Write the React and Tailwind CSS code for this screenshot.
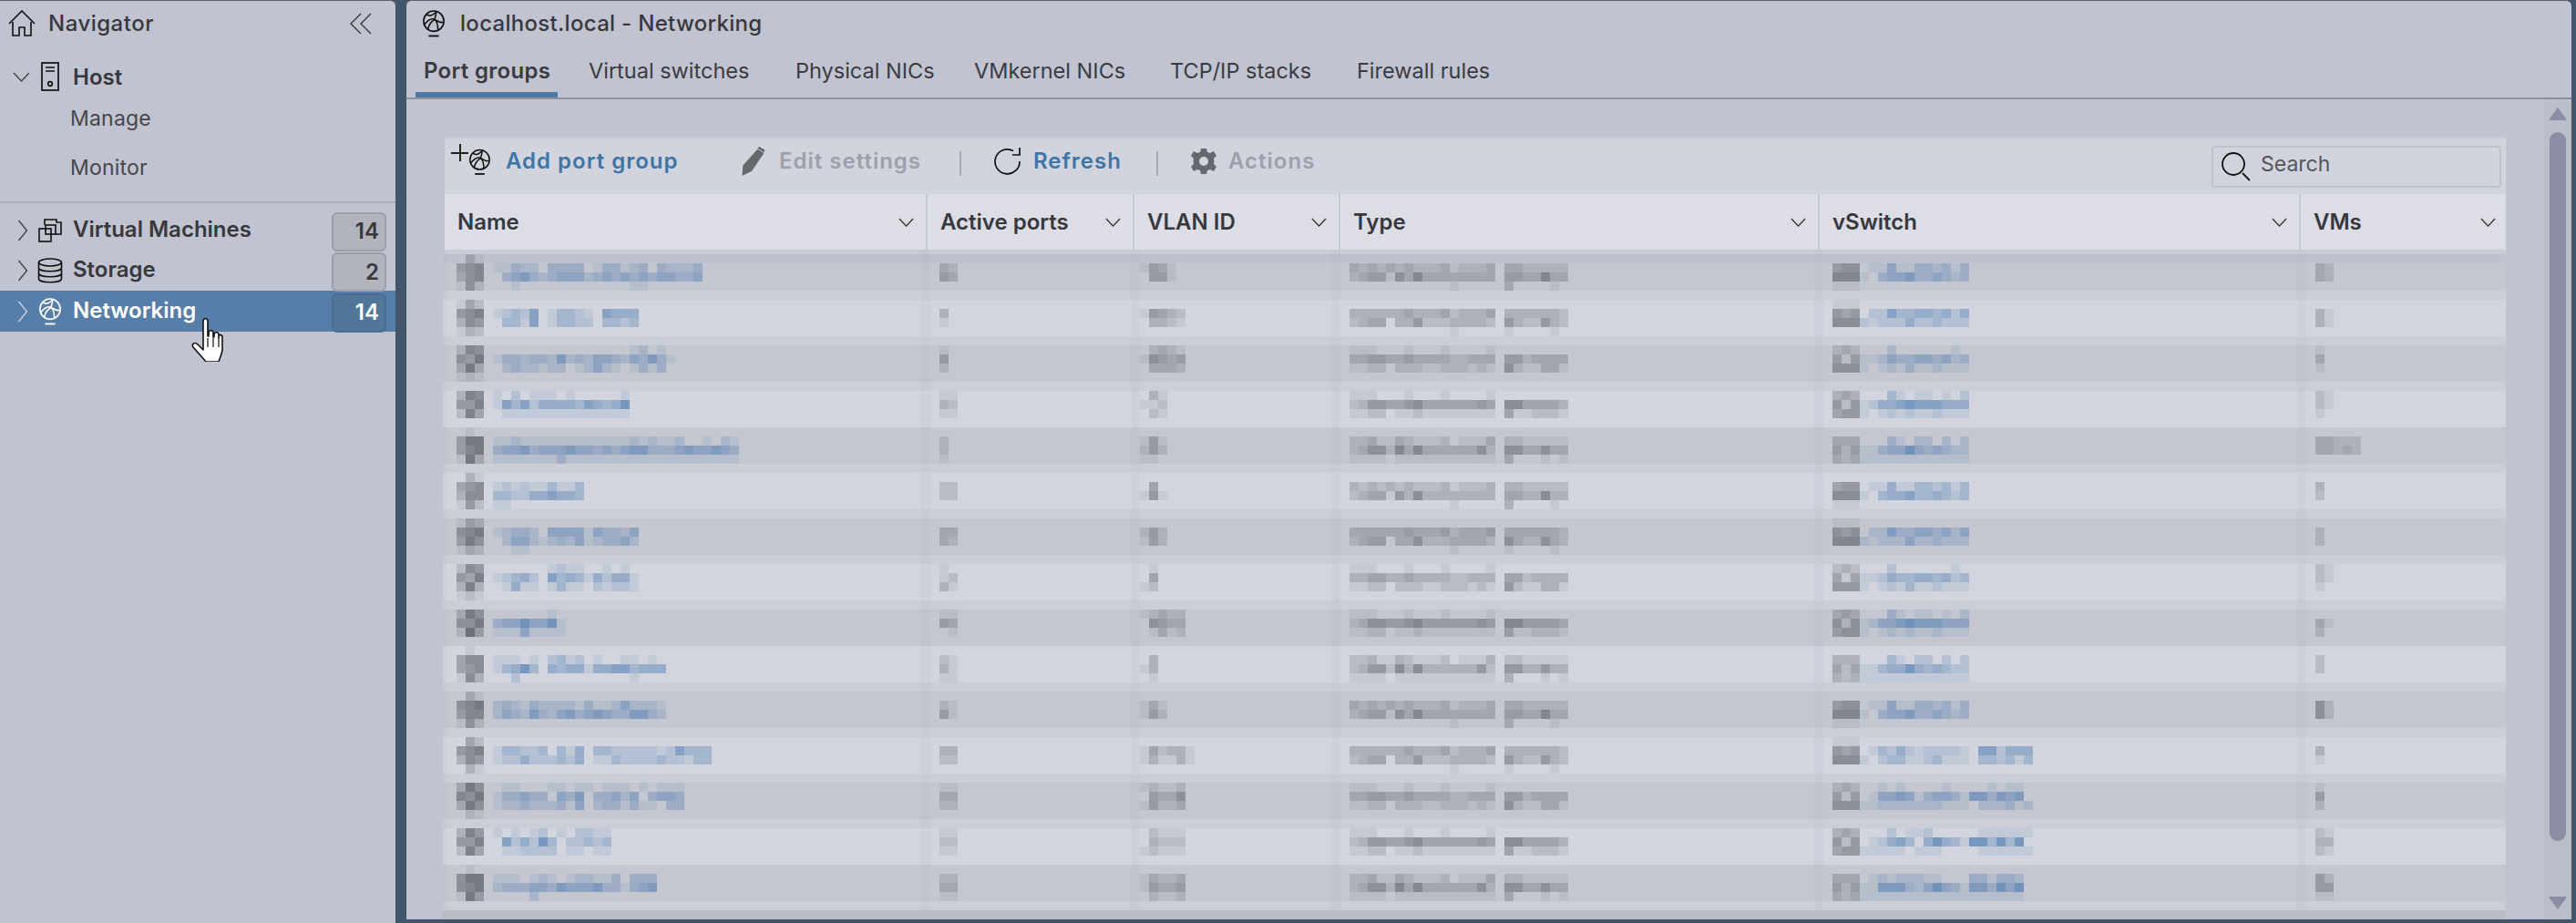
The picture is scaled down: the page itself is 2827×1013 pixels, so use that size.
import React from "react";

const GRAY = "rgb(60,62,70)";
const BLUE = "rgb(60,110,170)";

function Blocks({ rows, ink, step }) {
  const w = Math.max(1, ...rows.map((r) => r.length)) * 10;
  return (
    <svg width={w} height={40} className="block shrink-0" shapeRendering="crispEdges">
      {rows.map((r, y) =>
        r.split("").map((c, x) =>
          c === "." ? null : (
            <rect key={y + "-" + x} x={x * 10} y={y * 10} width={10} height={10} fill={ink} opacity={Number(c) * step} />
          )
        )
      )}
    </svg>
  );
}

const icons = [
  [".31", "456", "356", "152"], ["142", "567", "365", "132"], ["265", "547", "373", "121"], ["376", "557", "274", ""], [".1.", "477", "467", "173"],
  [".31", "456", "366", "152"], ["143", "567", "475", "132"], ["265", "547", "373", "121"], ["375", "557", "284", ""], [".1.", "466", "456", "163"],
  [".31", "567", "466", "152"], [".42", "567", "365", ".31"], ["375", "657", "375", ".21"], ["375", "557", "274", ""], [".1.", "577", "567", "174"],
];

const names = [
  ["", "11322.3333.133123.32223", ".3453234442343434344334", "..1............11"],
  ["", "12325.13321.5444", ".3315.13322.3323", ""],
  ["...............12.1", "13323325232443243531", ".2322122.12421.1313.", ""],
  ["1.2.111.1.....1", "153524444354346", ".11111111111111", ""],
  ["", "112111111111111212112..1.21", "344534445443434553334544543", "111111131111111111111111111"],
  ["", "1212113113", "3322445443", "11"],
  ["", "12332.4444143324", ".244212324123342", "..11"],
  ["......1211..1.1", "12342.5343142441", ".1411.1311.21221", ""],
  ["......1", "34464461", "11141111", ""],
  ["", "111.1.2312.1..11.1", "13463.4344144553444", "..2............1..."],
  ["", "2321322221311242221", "2432532453454335532", ""],
  ["", "133223.314.3322222125333", "1224222324.1132222322133", ""],
  [".11...11.11.111.1.111", "133433.435.33424.3443", "1223222314.2331311.33", ""],
  ["1.1.12.1.2211", ".524263.22323", ".112222.11.11", ""],
  ["", "111.121.122113.333", "233344354445331345", "....2............."],
];

const active = [
  ["", "32", "43", ""], ["", "3.", "1.", ""], ["1.", "4.", "2.", ""], ["11", "32", "11", ""], ["", "2.", "2.", "1."],
  ["", "22", "22", ""], ["", "33", "32", ""], ["1.", "12", "31", ""], ["11", "43", ".1", ""], ["", "21", "31", "11"],
  ["", "21", "41", ""], ["", "33", "22", ""], ["11", "33", "22", ""], ["11", "22", "11", ""], ["", "22", "33", "11"],
];

const vlan = [
  ["", "1431", ".441", ""], ["", "15432", ".3321", ""], [".2321", "15434", ".3332", ""], [".31", "112", ".21", ""], ["", "141", "242", "11."],
  ["", ".4", "151", ""], ["", "242", "142", ""], [".1", ".4", "12", ""], ["12322", ".5433", ".1312", ""], ["", ".3", "13", ".1"],
  ["", "131", "142", ""], ["", "142331", "131131", ""], ["12112", ".4335", "14223", ""], [".2111", ".3222", "12111", ""], ["", "13223", "14334", ".2112"],
];

const typePhases = [
  ["", "3232323222312223.3322222", "2344153633333333.4433633", "...........1.....3....1."],
  ["", "3333334333423334.3333332", "2344.33522233332.5322532", "...........1.....1....1."],
  ["111...1...1....1", "3344334333322333.4423333", "1122.22211222121.5211331", ""],
  ["111...1...1....1", "2355445644444454.6644443", "1122.11211111111.4112221", ""],
  ["", "22311321112.1113.2211111", "2355263633333352.5533533", "1111.11111111111.3...1.1"],
];

const swIcon = [
  ["", "455", "666", "111"],
  ["111", "545", "666", ""],
  ["232", "414", "555", ""],
  ["343", "525", "455", ""],
  ["", "333", "424", "323"],
];

const swText = [
  ["", ".11411332313", "1.3445334323", ""],
  ["", ".22533443424", "212224223222", ""],
  ["...2......1.", "112433443423", "1.1213112111", ""],
  ["...31.11.1.2", "124456555444", "1.1212112111", ""],
  ["", "...31.22.2.2", "113446434322", "111111111111"],
];

const swTail = {
  11: ["", ".13242122221.552444", "1.2331123111.332313", ""],
  12: ["..1.1....1....1.11", ".14454134431553545", "112222222111.222312", ""],
  13: ["...2.112.....111111", ".12453.46431663636", "11111.111....111111", ""],
  14: ["", ".12122211...331332", "115553246431553646", "111111111111111111"],
};

const vms = [
  ["", "32", "32", ""], ["", "31", "31", ""], ["1", "3", "1", ""], ["21", "21", "1", ""], ["", "33222", "33232", ""],
  ["", "3", "2", ""], ["", "2", "2", ""], ["21", "21", "1", ""], ["", "31", "2", ""], ["", "2.", "2.", ""],
  ["", "52", "52", ""], ["", "3", "1", ""], ["1", "4", "2", ""], ["21", "33", "21", ""], ["", "42", "44", "11"],
];

const spacer = [1, 1, 1, 0, 1, 1, 1, 1, 0, 1, 1, 1, 1, 0, 1];

function Globe({ className, color = "#111" }) {
  return (
    <svg viewBox="0 0 28 32" className={className} fill="none" stroke={color} strokeWidth="1.7">
      <circle cx="14" cy="13" r="12" />
      <path d="M5 5c5 3 8 1 12-3M3 17c4-5 8-8 12-6s7 5 10 3M7 23c1-5 3-9 8-12 3 2 4 7 4 13M15 11c1-3 2-6 2-9" />
      <path d="M8 30.500h12" strokeWidth="2" />
    </svg>
  );
}

function Chevron({ dir, className, color = "#333" }) {
  const d = dir === "down" ? "M1 1l8.500 9L18 1" : "M1 1l9 11L1 23";
  const vb = dir === "down" ? "0 0 19 11" : "0 0 11 24";
  return (
    <svg viewBox={vb} className={className} fill="none" stroke={color} strokeWidth="1.4">
      <path d={d} />
    </svg>
  );
}

function NavRow({ icon, label, badge, selected, h }) {
  return (
    <div className={"flex items-center " + h + " " + (selected ? "bg-[#567ea8]" : "")}>
      <div className="flex w-[38px] justify-end pr-[7px]">
        <Chevron dir="right" className="h-[24px] w-[12px]" color={selected ? "#c5d2e2" : "#444"} />
      </div>
      <div className="flex w-[42px] justify-center pr-[8px]">{icon}</div>
      <span className={"flex-1 pb-[2px] text-[24px] font-semibold " + (selected ? "text-white" : "text-[#37383d]")}>{label}</span>
      <div
        className={
          "mr-[10px] mt-[3px] flex h-[43px] w-[60px] items-center justify-end rounded-md border-2 pr-[6px] text-[24px] font-semibold " +
          (selected ? "border-[#4a6d94] bg-[#507699] text-white" : "border-[#9c9eaa] bg-[#b1b3bd] text-[#37383d]")
        }
      >
        {badge}
      </div>
    </div>
  );
}

function Tab({ w, label, active }) {
  return (
    <div className={"flex h-full " + w}>
      <div
        className={
          "flex h-full items-center px-[9px] text-[#3a3b40] " +
          (active ? "w-[156px] border-b-[6px] border-[#4f7aa6] pt-[4px] text-[24px] font-semibold tracking-[0.3px]" : "pb-[3px] text-[23.500px]")
        }
      >
        <span className="whitespace-nowrap">{label}</span>
      </div>
    </div>
  );
}

function Head({ w, label, last }) {
  return (
    <div
      className={
        "flex h-full items-center justify-between pl-[14px] text-[24px] font-semibold text-[#37383d] " +
        w +
        " " +
        (last ? "pr-[11px]" : "border-r-2 border-[#c7c9d2] pr-[13px]")
      }
    >
      <span className="whitespace-nowrap">{label}</span>
      <Chevron dir="down" className="h-[10px] w-[17px]" />
    </div>
  );
}

function Sep() {
  return <div className="mt-[4px] h-[27px] w-[2px] bg-[#a7a9b4]" />;
}

function Hand() {
  return (
    <svg viewBox="0 0 36 48" className="absolute left-[209px] top-[349px] h-[48px] w-[36px]" stroke="#111" strokeWidth="1.6" fill="#fff" strokeLinejoin="round">
      <path d="M14 3c0-3 5-3 5 0v17l1 0v-4c0-3 5-3 5 0v5h1v-3c0-3 5-3 5 0v4h0v-2c0-2 4-2 4 1v13c0 5-3 10-4 14H17c-3-4-8-9-14-16-2-4 2-6 5-3l6 6z" />
      <path d="M19 22v10M25 22v10M31 22v10" fill="none" strokeWidth="1.2" />
    </svg>
  );
}

const strip = "absolute bottom-[10px] top-0 w-[10px] bg-[#6a6e80]/[0.04]";
const btn = "text-[24px] font-semibold tracking-[1px] whitespace-nowrap";

export default function App() {
  return (
    <div className="relative flex h-[1013px] w-[2827px] overflow-hidden bg-[#42556a] text-[#37383d] [font-family:Inter,'Liberation_Sans',sans-serif]">
      <aside className="h-full w-[434px] shrink-0 rounded-tr-md border-t border-[#5b6470] bg-[#c1c3d0]">
        <div className="flex h-[49px] items-center">
          <svg viewBox="0 0 30 30" className="ml-[9px] h-[30px] w-[30px]" fill="none" stroke="#111" strokeWidth="1.6">
            <path d="M1 15L15 1l14 14" />
            <path d="M5 13v15h7v-9h6v9h7V13" />
          </svg>
          <span className="ml-[14px] flex-1 text-[24px] font-medium tracking-[0.5px] text-[#37383d]">Navigator</span>
          <svg viewBox="0 0 24 24" className="mr-[26px] h-[24px] w-[24px]" fill="none" stroke="#333" strokeWidth="1.3">
            <path d="M12 1L1 12l11 11M23 1L12 12l11 11" />
          </svg>
        </div>
        <div className="mt-[12px] flex h-[44px] items-center">
          <Chevron dir="down" className="ml-[13px] h-[11px] w-[21px]" color="#444" />
          <svg viewBox="0 0 20 32" className="ml-[11px] h-[32px] w-[20px]" fill="none" stroke="#111" strokeWidth="1.7">
            <rect x="1" y="1" width="18" height="30" />
            <path d="M5 6h10M5 10h10" />
            <circle cx="10" cy="24" r="2.300" />
          </svg>
          <span className="ml-[15px] pt-[2px] text-[24px] font-semibold text-[#37383d]">Host</span>
        </div>
        <div className="flex h-[48px] items-center pl-[77px] text-[23px] tracking-[0.2px] text-[#46474c]">Manage</div>
        <div className="mt-[3px] flex h-[54px] items-center pl-[77px] text-[23px] tracking-[0.2px] text-[#46474c]">Monitor</div>
        <div className="mt-[10px] h-[2px] bg-[#a9abb6]" />
        <div className="pt-[7px]">
          <NavRow
            h="h-[45px]"
            label="Virtual Machines"
            badge="14"
            icon={
              <svg viewBox="0 0 26 26" className="h-[26px] w-[26px]" fill="none" stroke="#111" strokeWidth="1.6">
                <path d="M7 7V1h13v3h5v13h-6" />
                <rect x="1" y="11" width="13" height="14" />
                <rect x="8" y="7" width="11" height="10" />
              </svg>
            }
          />
          <NavRow
            h="h-[44px]"
            label="Storage"
            badge="2"
            icon={
              <svg viewBox="0 0 28 28" className="h-[28px] w-[28px]" fill="none" stroke="#111" strokeWidth="1.6">
                <ellipse cx="14" cy="5" rx="12.500" ry="4" />
                <path d="M1.500 5v18c0 5 25 5 25 0V5M1.500 11c0 5 25 5 25 0M1.500 17c0 5 25 5 25 0" />
              </svg>
            }
          />
          <NavRow h="h-[45px]" label="Networking" badge="14" selected icon={<Globe className="h-[30px] w-[26px]" color="#fff" />} />
        </div>
      </aside>
      <Hand />
      <main className="ml-[12px] flex h-[1009px] w-[2376px] shrink-0 flex-col rounded-t-md border-t border-[#5b6470] bg-[#c1c3d0]">
        <div className="flex h-[50px] shrink-0 items-center pl-[17px]">
          <Globe className="h-[30px] w-[26px]" />
          <span className="ml-[16px] text-[24px] font-medium tracking-[0.3px] text-[#37383d]">localhost.local - Networking</span>
        </div>
        <div className="flex h-[58px] shrink-0 border-b-2 border-[#8f919e] pl-[10px]">
          <Tab w="w-[181px]" label="Port groups" active />
          <Tab w="w-[227px]" label="Virtual switches" />
          <Tab w="w-[196px]" label="Physical NICs" />
          <Tab w="w-[215px]" label="VMkernel NICs" />
          <Tab w="w-[205px]" label="TCP/IP stacks" />
          <Tab w="w-[180px]" label="Firewall rules" />
        </div>
        <div className="flex min-h-0 flex-1">
          <div className="w-[2346px] shrink-0 pl-[40px] pt-[41px]">
            <div className="w-[2264px] rounded-t-sm border-t-2 border-[#c8cad4]">
              <div className="ml-[2px] flex h-[61px] items-center justify-between bg-[#d1d4dd] pr-[5px]">
                <div className="flex items-center pb-[11px]">
                  <div className="relative ml-[7px] mt-[10px] h-[44px] w-[45px]">
                    <span className="absolute left-0 top-[7px] h-[2px] w-[19px] bg-[#222]" />
                    <span className="absolute left-[9px] top-[-2px] h-[19px] w-[2px] bg-[#222]" />
                    <Globe className="absolute left-[19px] top-[3px] h-[30px] w-[25px]" />
                  </div>
                  <div className="ml-[15px] w-[257px] text-[#3f74a6]">
                    <span className={btn}>Add port group</span>
                  </div>
                  <svg viewBox="0 0 30 36" className="h-[32px] w-[28px]" fill="#66686e">
                    <path d="M21 3l8 5-15 22-12 6 1-13zM23 0l7 4-1 3-8-5z" />
                  </svg>
                  <div className="ml-[15px] w-[198px] text-[#9da0ab]">
                    <span className={btn}>Edit settings</span>
                  </div>
                  <Sep />
                  <svg viewBox="0 0 30 30" className="ml-[36px] h-[30px] w-[30px]" fill="none" stroke="#111" strokeWidth="1.7">
                    <path d="M21 3.500A13.500 13.500 0 1 0 28 15" />
                    <path d="M28 0v8h-8" />
                  </svg>
                  <div className="ml-[13px] w-[135px] text-[#3f74a6]">
                    <span className={btn}>Refresh</span>
                  </div>
                  <Sep />
                  <svg viewBox="0 0 28 28" className="ml-[36px] h-[28px] w-[28px]" fill="#66686e">
                    <path fillRule="evenodd" d="M11 0h6l1 4 3 1 4-2 3 5-3 3 .5 3-.5 3 3 3-3 5-4-2-3 1-1 4h-6l-1-4-3-1-4 2-3-5 3-3-.5-3 .5-3-3-3 3-5 4 2 3-1zM14 9a5 5 0 1 0 0 10 5 5 0 0 0 0-10z" />
                  </svg>
                  <div className="ml-[13px] text-[#9da0ab]">
                    <span className={btn}>Actions</span>
                  </div>
                </div>
                <div className="flex h-[46px] w-[318px] items-center rounded-[4px] border-2 border-[#bfc1cc] pl-[9px] text-[23px] text-[#55565c]">
                  <svg viewBox="0 0 32 32" className="h-[32px] w-[32px]" fill="none" stroke="#111" strokeWidth="1.8">
                    <circle cx="13" cy="13" r="12" />
                    <path d="M23 23l8 8" />
                  </svg>
                  <span className="ml-[11px] pb-[5px]">Search</span>
                </div>
              </div>
              <div className="ml-[2px] flex h-[61px] bg-[#dcdde5]">
                <Head w="w-[530px]" label="Name" />
                <Head w="w-[227px]" label="Active ports" />
                <Head w="w-[226px]" label="VLAN ID" />
                <Head w="w-[526px]" label="Type" />
                <Head w="w-[528px]" label="vSwitch" />
                <Head w="w-[225px]" label="VMs" last />
              </div>
              <div className="relative">
                <div className="h-[5px] bg-[#c9ccd5]" />
                {icons.map((ic, i) => {
                  const phase = i % 5;
                  return (
                    <div key={i} className={spacer[i] ? "h-[50px] bg-[#cbced7]" : "h-[40px]"}>
                      <div
                        className={
                          "flex h-[40px] " +
                          (i === 0
                            ? "bg-[linear-gradient(#bfc2cc_10px,#c4c7d0_10px)]"
                            : i % 2
                            ? "bg-[#d2d5de]"
                            : "bg-[#c4c7d0]")
                        }
                      >
                        <div className="flex w-[535px] pl-[15px]">
                          <Blocks rows={ic} ink={GRAY} step={0.08} />
                          <div className="ml-[10px]">
                            <Blocks rows={names[i]} ink={BLUE} step={0.1} />
                          </div>
                        </div>
                        <div className="w-[230px] pl-[10px]">
                          <Blocks rows={active[i]} ink={GRAY} step={0.08} />
                        </div>
                        <div className="w-[220px]">
                          <Blocks rows={vlan[i]} ink={GRAY} step={0.08} />
                        </div>
                        <div className="w-[530px] pl-[10px]">
                          <Blocks rows={typePhases[phase]} ink={GRAY} step={0.08} />
                        </div>
                        <div className="flex w-[530px] pl-[10px]">
                          <Blocks rows={swIcon[phase]} ink={GRAY} step={0.08} />
                          <Blocks rows={swTail[i] || swText[phase]} ink={BLUE} step={0.1} />
                        </div>
                        <div className="w-[219px] pl-[10px]">
                          <Blocks rows={vms[i]} ink={GRAY} step={0.08} />
                        </div>
                      </div>
                    </div>
                  );
                })}
                <div className="h-[10px] bg-[#b9bbc5]" />
                <div className="absolute bottom-[10px] left-0 top-0 w-[5px] bg-[#6a6e80]/[0.04]" />
                <div className={strip + " left-[525px]"} />
                <div className={strip + " left-[755px]"} />
                <div className={strip + " left-[975px]"} />
                <div className={strip + " left-[1505px]"} />
                <div className={strip + " left-[2035px]"} />
              </div>
            </div>
          </div>
          <div className="flex w-[30px] shrink-0 flex-col items-center rounded-br-md bg-[#bbbdc9] pt-[9px]">
            <svg viewBox="0 0 18 14" className="h-[14px] w-[18px]" fill="#8c8ea4">
              <path d="M9 0l9 12v2H0v-2z" />
            </svg>
            <div className="mt-[13px] h-[778px] w-[18px] rounded-[9px] bg-[#8c8ea4]" />
            <svg viewBox="0 0 18 14" className="mt-[61px] h-[14px] w-[18px]" fill="#8c8ea4">
              <path d="M9 14L18 2V0H0v2z" />
            </svg>
          </div>
        </div>
      </main>
    </div>
  );
}
